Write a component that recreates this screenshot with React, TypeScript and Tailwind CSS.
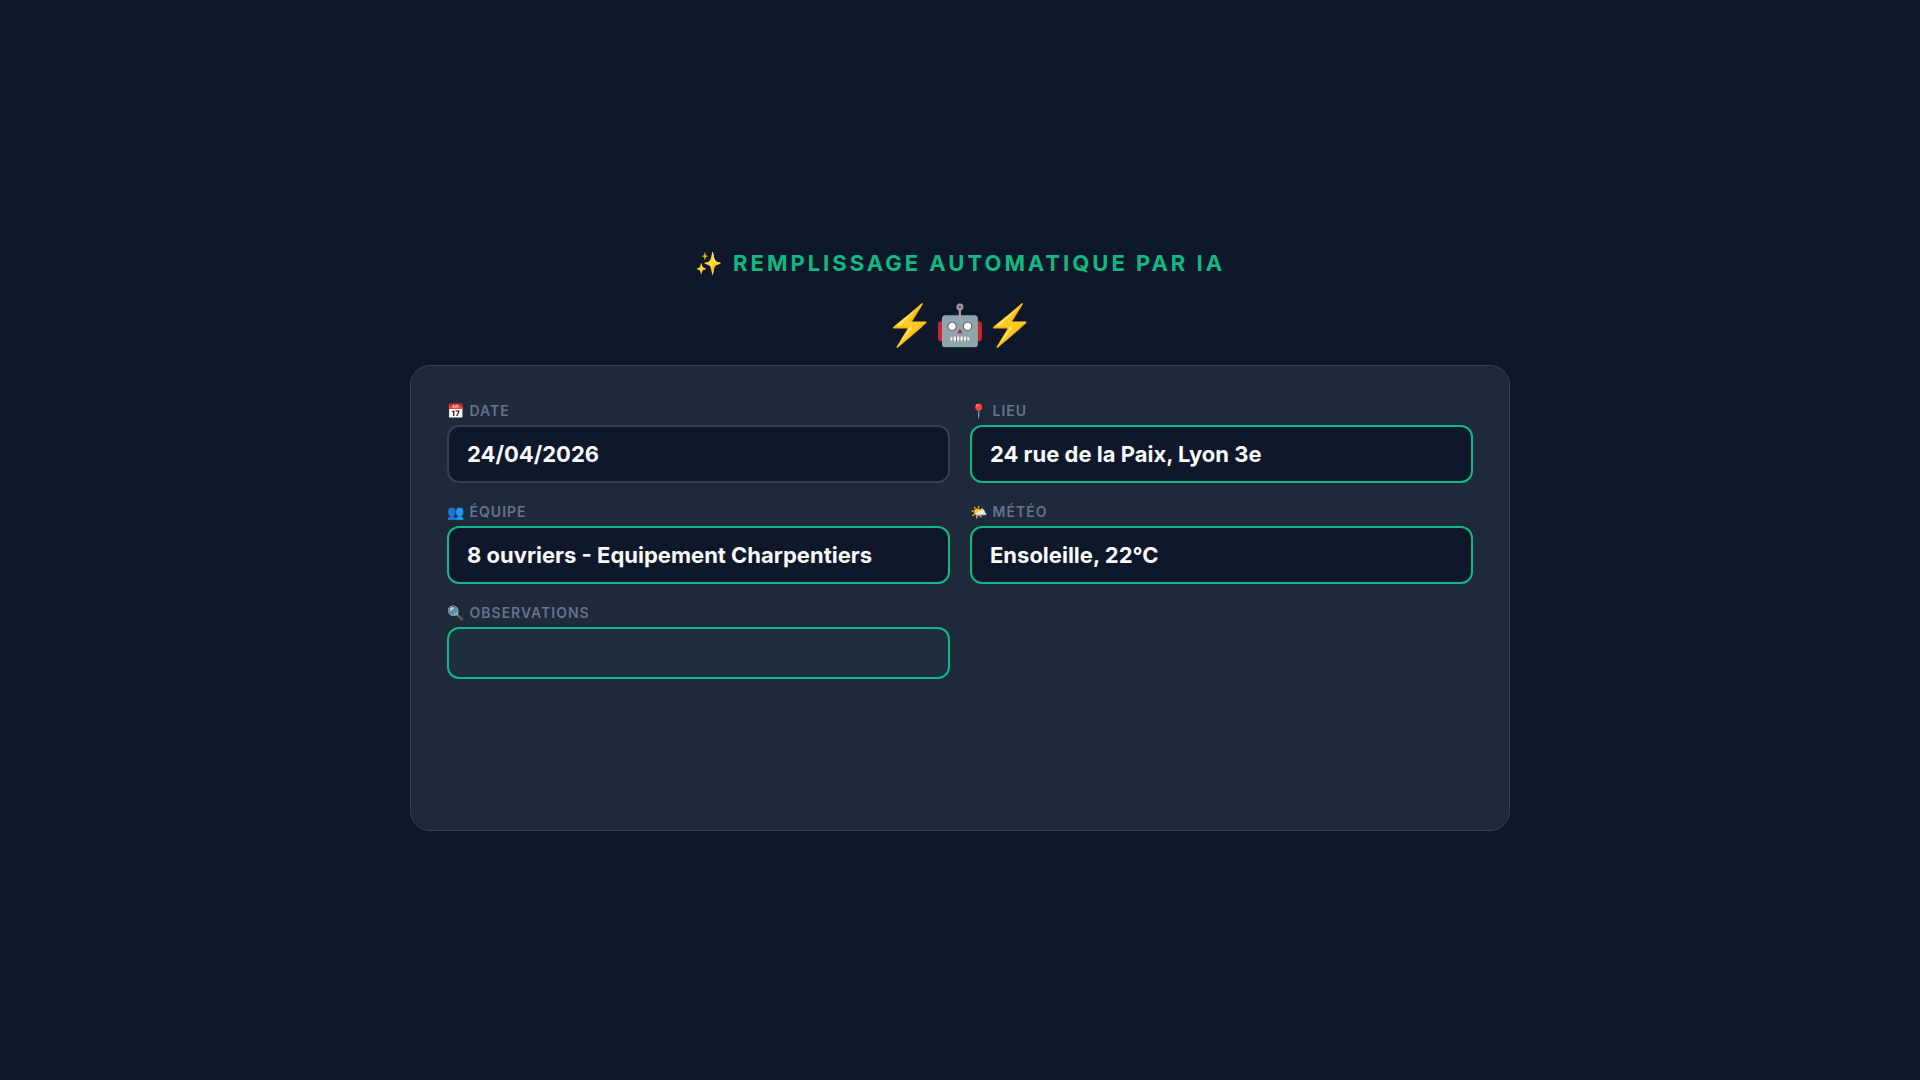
import React, { useState } from "react";
import clsx from "clsx";

type Field = {
  id: string;
  icon: string;
  label: string;
  value: string;
  state: "idle" | "filled" | "active";
};

const initialFields: Field[] = [
  { id: "date", icon: "📅", label: "Date", value: "24/04/2026", state: "idle" },
  { id: "lieu", icon: "📍", label: "Lieu", value: "24 rue de la Paix, Lyon 3e", state: "filled" },
  { id: "equipe", icon: "👥", label: "Équipe", value: "8 ouvriers - Equipement Charpentiers", state: "filled" },
  { id: "meteo", icon: "🌤️", label: "Météo", value: "Ensoleille, 22°C", state: "filled" },
  { id: "observations", icon: "🔍", label: "Observations", value: "", state: "active" },
];

const App = () => {
  const [fields, setFields] = useState<Field[]>(initialFields);

  const updateField = (id: string, value: string) => {
    setFields(fields.map((field) => (field.id === id ? { ...field, value } : field)));
  };

  return (
    <main className="min-h-screen bg-[#0f172a] flex flex-col items-center justify-center font-[Inter,sans-serif]">
      <h1 className="mb-6 text-[22px] leading-[27px] font-bold tracking-[3px] uppercase text-[#10b981]">
        ✨ Remplissage automatique par IA
      </h1>
      <div className="mb-4 text-[40px] leading-[48px]">⚡🤖⚡</div>

      {/* Form card */}
      <form className="w-full max-w-[1100px] min-h-[466px] grid grid-cols-1 md:grid-cols-2 gap-5 content-start rounded-[20px] border border-[#334155] bg-[#1e293b] p-9">
        {fields.map((field) => (
          <div key={field.id} className="flex flex-col gap-1.5">
            <label
              htmlFor={field.id}
              className="text-[14px] leading-[17px] font-semibold tracking-[1px] uppercase text-[#64748b]"
            >
              {field.icon} {field.label}
            </label>
            <input
              id={field.id}
              type="text"
              value={field.value}
              onChange={(e) => updateField(field.id, e.target.value)}
              className={clsx(
                "w-full rounded-xl border-2 px-[18px] text-[22px] font-bold text-[#f8fafc] outline-none",
                field.state === "idle" && "h-[58px] border-[#334155] bg-[#0f172a]",
                field.state === "filled" && "h-[58px] border-[#10b981] bg-[#0f172a]",
                field.state === "active" && "h-[52px] border-[#10b981] bg-[#10b981]/5"
              )}
            />
          </div>
        ))}
      </form>
    </main>
  );
};

export default App;
